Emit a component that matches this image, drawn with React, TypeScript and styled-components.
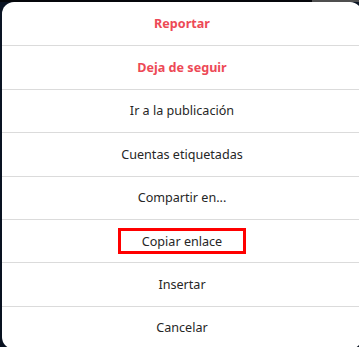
import * as React from 'react';
import styled, { createGlobalStyle } from 'styled-components';

const GlobalStyle = createGlobalStyle`
  html, body {
    margin: 0;
    padding: 0;
    height: 100%;
  }
  body {
    background: linear-gradient(90deg, #05070b 0, #05070b 312px, #4f4f4f 312px);
    font-family: "Segoe UI", "Noto Sans", "Open Sans", sans-serif;
    overflow: hidden;
  }
  #root {
    height: 100%;
  }
`;

const Backdrop = styled.div`
  height: 100%;
  padding: 2px 0 0 2px;
  box-sizing: border-box;
  background: linear-gradient(180deg, transparent 0, transparent 2px, #0a1424 2px, #08111f 100%);
`;

const Dialog = styled.div`
  width: 360px;
  background: #fff;
  border-radius: 12px;
  overflow: hidden;
  display: flex;
  flex-direction: column;
`;

const Option = styled.button<{ $danger?: boolean }>`
  height: 43.4px;
  box-sizing: border-box;
  display: flex;
  align-items: center;
  justify-content: center;
  border: 0;
  border-top: 1px solid #dbdbdb;
  background: transparent;
  padding: 0;
  margin: 0;
  font-family: inherit;
  font-size: 12.6px;
  line-height: 17px;
  color: ${(p) => (p.$danger ? '#ed4956' : '#262626')};
  font-weight: ${(p) => (p.$danger ? 700 : 400)};
  cursor: pointer;

  &:first-child {
    border-top: 0;
  }
`;

const Highlight = styled.span`
  display: flex;
  align-items: center;
  justify-content: center;
  width: 128px;
  height: 26px;
  box-sizing: border-box;
  border: 3px solid #ff0000;
`;

interface MenuItem {
  label: string,
  danger?: boolean,
  marked?: boolean,
}

const items: MenuItem[] = [
  { label: 'Reportar', danger: true },
  { label: 'Deja de seguir', danger: true },
  { label: 'Ir a la publicación' },
  { label: 'Cuentas etiquetadas' },
  { label: 'Compartir en...' },
  { label: 'Copiar enlace', marked: true },
  { label: 'Insertar' },
  { label: 'Cancelar' },
];

export default function App() {
  return (
    <>
      <GlobalStyle />
      <Backdrop>
        <Dialog role="dialog">
          {items.map((item) => (
            <Option key={item.label} $danger={item.danger}>
              {item.marked ? <Highlight>{item.label}</Highlight> : item.label}
            </Option>
          ))}
        </Dialog>
      </Backdrop>
    </>
  );
}
